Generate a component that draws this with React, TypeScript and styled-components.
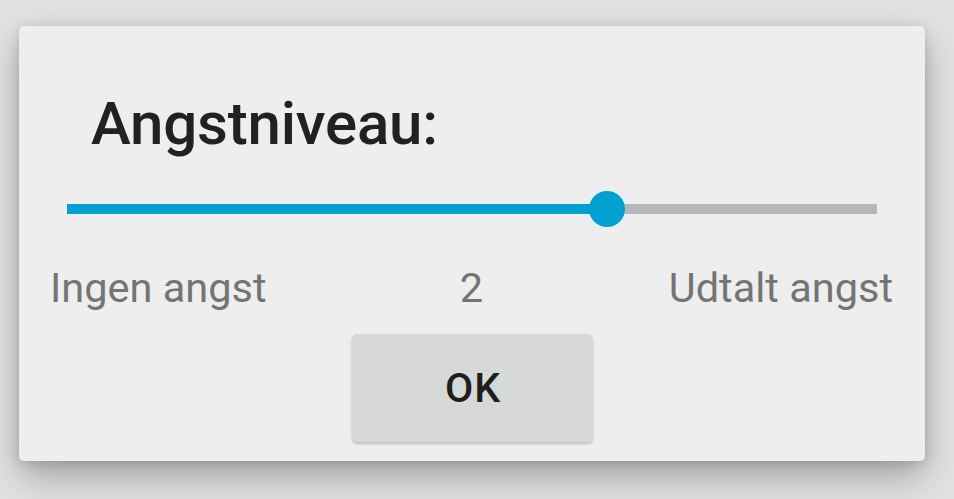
import React from "react";
import styled, { createGlobalStyle } from "styled-components";

const Global = createGlobalStyle`
  html, body { margin: 0; padding: 0; background: #e2e2e2; }
  body { font-family: Roboto, "Noto Sans", "Liberation Sans", sans-serif; }
`;

const Page = styled.div`
  width: 954px;
  height: 499px;
  box-sizing: border-box;
  padding: 26px 29px 0 19px;
  background: #e2e2e2;
`;

const Dialog = styled.div`
  width: 906px;
  height: 435px;
  box-sizing: border-box;
  background: #eeeeee;
  border-radius: 5px;
  box-shadow: 0 16px 36px rgba(0, 0, 0, 0.28), 0 2px 12px rgba(0, 0, 0, 0.14);
  display: flex;
  flex-direction: column;
  padding-top: 68px;
`;

const Title = styled.h1`
  margin: 0 0 0 72px;
  font-size: 60px;
  line-height: 60px;
  font-weight: 500;
  color: #212121;
  letter-spacing: -0.2px;
`;

const SliderWrap = styled.div`
  margin: 37px 48px 0 48px;
  height: 36px;
  position: relative;
  display: flex;
  align-items: center;
`;

const Track = styled.div`
  flex: 1;
  height: 10px;
  background: #b3b9bb;
  display: flex;
`;

const Fill = styled.div`
  height: 100%;
  background: #00a1d1;
`;

const Thumb = styled.div`
  position: absolute;
  top: 50%;
  width: 36px;
  height: 36px;
  border-radius: 50%;
  background: #00a1d1;
  transform: translate(-50%, -50%);
`;

const Labels = styled.div`
  margin: 40px 32px 0 31px;
  display: grid;
  grid-template-columns: 1fr auto 1fr;
  align-items: center;
  font-size: 41.5px;
  line-height: 42px;
  color: #747474;
`;

const Label = styled.span<{ $align: "left" | "center" | "right" }>`
  text-align: ${(p) => p.$align};
`;

const ButtonRow = styled.div`
  display: flex;
  justify-content: center;
  margin-top: 25px;
`;

const OkButton = styled.button`
  width: 241px;
  height: 108px;
  border: none;
  border-radius: 5px;
  background: #d7d8d8;
  box-shadow: 0 2px 3px rgba(0, 0, 0, 0.2);
  font-family: Roboto, "Noto Sans", sans-serif;
  font-size: 41px;
  font-weight: 500;
  color: #1e1e1e;
  letter-spacing: 0.8px;
  padding: 0 0 1px 2px;
`;

export default function App() {
  const value = 2;
  const min = 0;
  const max = 3;
  const pct = ((value - min) / (max - min)) * 100;
  return (
    <>
      <Global />
      <Page>
        <Dialog>
          <Title>Angstniveau:</Title>
          <SliderWrap>
            <Track>
              <Fill style={{ width: `${pct}%` }} />
            </Track>
            <Thumb style={{ left: `${pct}%` }} />
          </SliderWrap>
          <Labels>
            <Label $align="left">Ingen angst</Label>
            <Label $align="center">{value}</Label>
            <Label $align="right">Udtalt angst</Label>
          </Labels>
          <ButtonRow>
            <OkButton>OK</OkButton>
          </ButtonRow>
        </Dialog>
      </Page>
    </>
  );
}
